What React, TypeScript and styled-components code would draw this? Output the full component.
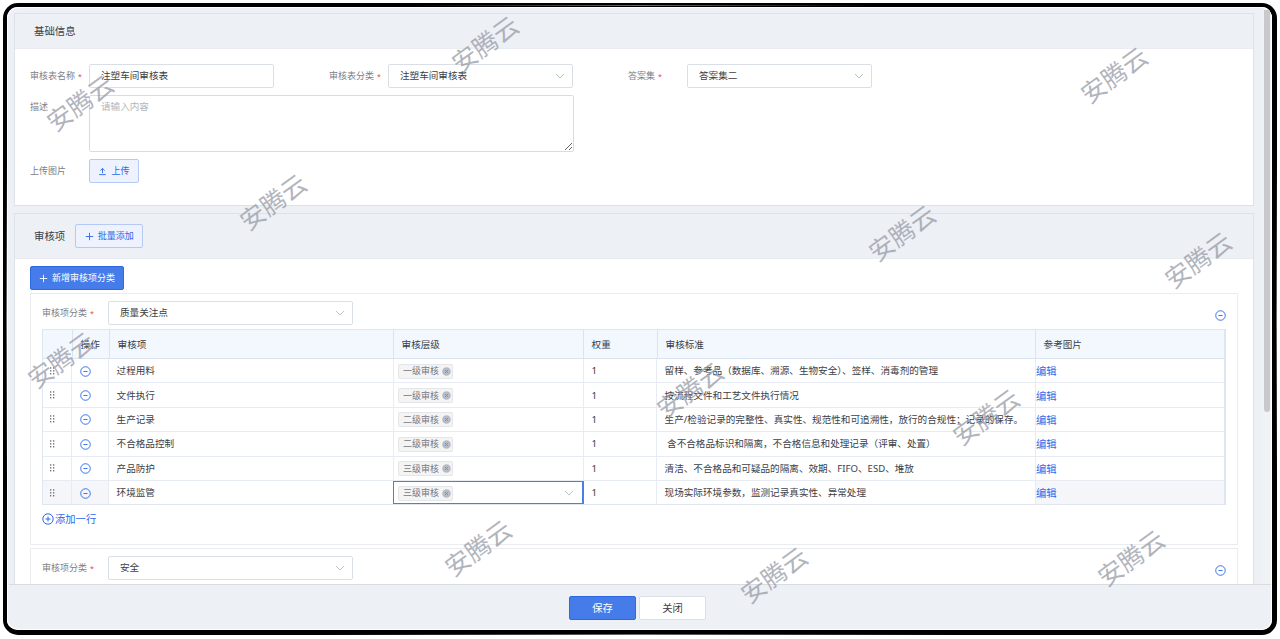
import React from 'react'
import styled, { createGlobalStyle, css } from 'styled-components'

const ROWS = [
  { name: '过程用料', level: '一级审核', standard: '留样、参考品（数据库、溯源、生物安全）、签样、消毒剂的管理' },
  { name: '文件执行', level: '一级审核', standard: '按流程文件和工艺文件执行情况' },
  { name: '生产记录', level: '二级审核', standard: '生产/检验记录的完整性、真实性、规范性和可追溯性，放行的合规性；记录的保存。' },
  { name: '不合格品控制', level: '二级审核', standard: ' 含不合格品标识和隔离，不合格信息和处理记录（评审、处置）' },
  { name: '产品防护', level: '三级审核', standard: '清洁、不合格品和可疑品的隔离、效期、FIFO、ESD、堆放' },
  { name: '环境监管', level: '三级审核', standard: '现场实际环境参数，监测记录真实性、异常处理' },
]

// centre points of the watermark stamps
const STAMPS = [
  [485, 44],
  [80, 103],
  [1114, 75],
  [273, 202],
  [902, 233],
  [1198, 260],
  [61, 360],
  [690, 390],
  [986, 417],
  [478, 548],
  [774, 575],
  [1131, 558],
]

const Chevron = () => (
  <ChevronSvg viewBox="0 0 10 10">
    <path d="M1 3l4 4 4-4" fill="none" stroke="#b4bac6" strokeWidth="0.9" />
  </ChevronSvg>
)

const CircleIcon = ({ size = 11, plus = false }: { size?: number; plus?: boolean }) => (
  <svg width={size} height={size} viewBox="0 0 12 12" fill="none" stroke="#2b68e8" strokeWidth="1">
    <circle cx="6" cy="6" r="5.2" />
    <path d={plus ? 'M3.5 6h5M6 3.5v5' : 'M3.8 6h4.4'} />
  </svg>
)

const PlusIcon = () => (
  <svg width="9" height="9" viewBox="0 0 9 9" fill="none" stroke="currentColor" strokeWidth="0.9">
    <path d="M0.8 4.5h7.4M4.5 0.8v7.4" />
  </svg>
)

const UploadIcon = () => (
  <svg width="9" height="9" viewBox="0 0 9 9" fill="none" stroke="currentColor" strokeWidth="0.9">
    <path d="M1.2 7.6h6.6M4.5 6.2V1.4M2.3 3.6l2.2-2.2 2.2 2.2" />
  </svg>
)

const DragIcon = () => (
  <svg width="5" height="8" viewBox="0 0 5 8" fill="#5f626a">
    {[0.3, 3.2, 6.1].map((y) => (
      <g key={y}>
        <rect x="0" y={y} width="1.3" height="1.3" />
        <rect x="3" y={y} width="1.3" height="1.3" />
      </g>
    ))}
  </svg>
)

const LevelTag = ({ text }: { text: string }) => (
  <Tag>
    {text}
    <svg width="9" height="9" viewBox="0 0 9 9">
      <circle cx="4.5" cy="4.5" r="4.3" fill="#b6bbc5" />
      <path d="M3 3l3 3M6 3L3 6" stroke="#848994" strokeWidth="0.8" />
    </svg>
  </Tag>
)

export default function App() {
  return (
    <Frame>
      <GlobalStyle />
      <Screen>
        <Main>
          <Content>
            <Section $height={193}>
              <SectionHeader $height={35}>基础信息</SectionHeader>
              <Form>
                <Label>
                  审核表名称<Star>*</Star>
                </Label>
                <Field>注塑车间审核表</Field>
                <Label>
                  审核表分类<Star>*</Star>
                </Label>
                <Field>
                  注塑车间审核表
                  <Chevron />
                </Field>
                <Label>
                  答案集<Star>*</Star>
                </Label>
                <Field>
                  答案集二
                  <Chevron />
                </Field>
                <Label>描述</Label>
                <TextArea placeholder="请输入内容" />
                <RowStartLabel>上传图片</RowStartLabel>
                <PlainButton $width={50}>
                  <UploadIcon />
                  上传
                </PlainButton>
              </Form>
            </Section>

            <Section $height={400}>
              <SectionHeader $height={45}>
                审核项
                <PlainButton $width={68}>
                  <PlusIcon />
                  批量添加
                </PlainButton>
              </SectionHeader>
              <SectionBody>
                <SolidButton>
                  <PlusIcon />
                  新增审核项分类
                </SolidButton>
                <Group>
                  <GroupHeader>
                    <GroupLabel>
                      审核项分类<Star>*</Star>
                    </GroupLabel>
                    <CategoryField>
                      质量关注点
                      <Chevron />
                    </CategoryField>
                    <CircleIcon />
                  </GroupHeader>
                  <Table>
                    <HeadRow>
                      <Cell />
                      <Cell>操作</Cell>
                      <Cell>审核项</Cell>
                      <Cell>审核层级</Cell>
                      <Cell>权重</Cell>
                      <Cell>审核标准</Cell>
                      <Cell>参考图片</Cell>
                    </HeadRow>
                    {ROWS.map((row, i) => {
                      const active = i === ROWS.length - 1
                      return (
                        <Row key={row.name}>
                          <DragCell $shaded={active}>
                            <DragIcon />
                          </DragCell>
                          <Cell $shaded={active}>
                            <CircleIcon />
                          </Cell>
                          <Cell>{row.name}</Cell>
                          <LevelCell $active={active}>
                            <LevelTag text={row.level} />
                            {active && <Chevron />}
                          </LevelCell>
                          <Cell>1</Cell>
                          <Cell>{row.standard}</Cell>
                          <LinkCell $shaded={active}>编辑</LinkCell>
                        </Row>
                      )
                    })}
                  </Table>
                  <AddRow>
                    <CircleIcon size={12} plus />
                    添加一行
                  </AddRow>
                </Group>
                <Group>
                  <GroupHeader>
                    <GroupLabel>
                      审核项分类<Star>*</Star>
                    </GroupLabel>
                    <CategoryField>
                      安全
                      <Chevron />
                    </CategoryField>
                    <CircleIcon />
                  </GroupHeader>
                </Group>
              </SectionBody>
            </Section>
          </Content>
          <ScrollTrack>
            <ScrollThumb />
          </ScrollTrack>
        </Main>
        <Footer>
          <FooterButton $primary>保存</FooterButton>
          <FooterButton>关闭</FooterButton>
        </Footer>
      </Screen>
      {STAMPS.map(([x, y]) => (
        <Stamp key={`${x}-${y}`} style={{ left: x, top: y }}>
          安腾云
        </Stamp>
      ))}
    </Frame>
  )
}

const GlobalStyle = createGlobalStyle`
  * {
    box-sizing: border-box;
  }
  body {
    margin: 0;
    overflow: hidden;
    background: #fff;
    color: #3b3e45;
    font-family: 'Noto Sans', 'Noto Sans CJK SC', sans-serif;
    font-size: 9.6px;
    line-height: 14px;
  }
`

const Frame = styled.div`
  width: 1280px;
  height: 639px;
  padding: 3px;
  padding-bottom: 4px;
`

// black bezel with a faint sheen in the middle of each side
const Screen = styled.div`
  width: 1274px;
  height: 632px;
  padding: 2px 1px 1px 2px;
  border: 4px solid transparent;
  border-right-width: 5px;
  border-bottom-width: 5px;
  border-radius: 15px;
  display: flex;
  flex-direction: column;
  overflow: hidden;
  background:
    linear-gradient(#edf0f5, #edf0f5) padding-box,
    linear-gradient(90deg, #000 32%, #6a6a6a 50%, #000 68%) 0 2px / 100% 1px no-repeat border-box,
    linear-gradient(90deg, #000 25%, #6a6a6a 50%, #000 75%) 0 100% / 100% 1px no-repeat border-box,
    linear-gradient(#000 25%, #6a6a6a 50%, #000 75%) 3px 0 / 1px 100% no-repeat border-box,
    linear-gradient(#000 25%, #6a6a6a 50%, #000 75%) 100% 0 / 1px 100% no-repeat border-box,
    linear-gradient(#000, #000) border-box;
  box-shadow: inset 0 0 0 1px #fff;
`

const Main = styled.div`
  height: 575px;
  flex: none;
  display: flex;
  overflow: hidden;
`

const Content = styled.div`
  width: 1254px;
  padding: 4px 9px 0 5px;
  display: flex;
  flex-direction: column;
  gap: 7px;
`

const ScrollTrack = styled.div`
  width: 8px;
  padding: 1px 1px 0;
  background: #f1f2f4;
`

const ScrollThumb = styled.div`
  height: 402px;
  border-radius: 0 0 3px 3px;
  background: #c9c9cb;
`

const Section = styled.section<{ $height: number }>`
  flex: none;
  height: ${({ $height }) => $height}px;
  border: 1px solid #dde2ea;
  background: #fff;
`

const SectionHeader = styled.header<{ $height: number }>`
  height: ${({ $height }) => $height}px;
  padding-left: 19px;
  display: flex;
  align-items: center;
  gap: 10px;
  background: #edf0f5;
  border-bottom: 1px solid #e9ecf1;
  font-size: 10.4px;
`

const Form = styled.div`
  padding: 15px 0 0 15px;
  display: grid;
  grid-template-columns: 59px 240px 59px 240px 59px 240px;
  grid-template-rows: 24px 57px 24px;
  row-gap: 7px;
`

const Label = styled.label`
  padding-top: 5px;
  color: #7d8086;
  font-size: 9px;
  white-space: nowrap;
`

const RowStartLabel = styled(Label)`
  grid-column-start: 1;
`

const Star = styled.span`
  margin-left: 3px;
  color: #f03a3a;
  font-size: 7px;
`

const Field = styled.div`
  width: 185px;
  height: 24px;
  padding: 0 7px 0 11px;
  display: flex;
  align-items: center;
  justify-content: space-between;
  border: 1px solid #dadee7;
  border-radius: 2px;
  background: #fff;
`

const CategoryField = styled(Field)`
  width: 245px;
  margin-right: auto;
`

const TextArea = styled.textarea`
  grid-column: 2 / 7;
  width: 485px;
  height: 57px;
  margin: 0;
  padding: 4px 11px;
  border: 1px solid #d6dbe4;
  border-radius: 2px;
  font: inherit;
  outline: none;
  resize: vertical;

  &::placeholder {
    color: #b3b6bd;
  }
`

const ChevronSvg = styled.svg`
  width: 10px;
  height: 10px;
  flex: none;
`

const PlainButton = styled.button<{ $width: number }>`
  width: ${({ $width }) => $width}px;
  height: 24px;
  padding: 0;
  display: flex;
  align-items: center;
  justify-content: center;
  gap: 4px;
  border: 1px solid #b5c9f7;
  border-radius: 2px;
  background: #edf2fe;
  color: #2b68e8;
  font: inherit;
  font-size: 9px;
`

const SectionBody = styled.div`
  padding: 7px 15px 0;
`

const SolidButton = styled(PlainButton).attrs({ $width: 94 })`
  margin-bottom: 3px;
  border-color: #2f69e2;
  background: #467ce9;
  color: #fff;
`

const Group = styled.div`
  height: 252px;
  margin-bottom: 3px;
  padding: 7px 11px 0;
  border: 1px solid #eaecf0;
`

const GroupHeader = styled.div`
  height: 24px;
  margin-bottom: 4px;
  display: flex;
  align-items: center;

  > svg {
    margin-top: 4px;
  }
`

const GroupLabel = styled(Label)`
  width: 66px;
  padding: 1px 0 0;
`

const Table = styled.div`
  width: 1184px;
  border: 1px solid #e0e6f0;
  border-right-width: 2px;
`

const Row = styled.div`
  height: 24.4px;
  display: grid;
  grid-template-columns: 29px 37px 285px 190px 73px 379px 1fr;
  border-bottom: 1px solid #e7ebf3;

  &:last-child {
    height: 23.4px;
    border-bottom: 0;
  }
`

const Cell = styled.div<{ $shaded?: boolean }>`
  padding: 1px 0 0 7.6px;
  display: flex;
  align-items: center;
  border-right: 1px solid #e7ebf3;
  background: ${({ $shaded }) => ($shaded ? '#f4f6fa' : 'transparent')};
  white-space: pre;

  &:last-child {
    border-right: 0;
  }
`

const DragCell = styled(Cell)`
  padding: 0 0 0 7px;
`

const HeadRow = styled(Row)`
  height: 29px;
  grid-template-columns: 30px 37px 284px 190px 74px 378px 1fr;
  background: #f3f7fe;
  border-bottom-color: #dbe3ef;

  ${Cell} {
    border-right-color: #dbe3ef;
  }
`

const LevelCell = styled(Cell)<{ $active: boolean }>`
  padding: 1px 8px 0 4px;
  justify-content: space-between;
  ${({ $active }) =>
    $active &&
    css`
      margin-left: -1px;
      border: 1px solid #4a7fe8;
      border-right: 2px solid #4a7fe8;
    `}
`

const LinkCell = styled(Cell)`
  padding-left: 0;
  color: #2b68e8;
  font-size: 10.3px;
`

const Tag = styled.span`
  width: 55px;
  height: 15px;
  padding: 0 0 0 4px;
  display: flex;
  align-items: center;
  gap: 3px;
  border: 1px solid #e4e6ea;
  border-radius: 2px;
  background: #f4f4f5;
  color: #74777d;
  font-size: 9px;
`

const AddRow = styled.div`
  margin-top: 7px;
  display: flex;
  align-items: center;
  gap: 1px;
  color: #2b68e8;
  font-size: 10.3px;
`

const Footer = styled.footer`
  height: 46px;
  padding-top: 11px;
  padding-right: 5px;
  display: flex;
  justify-content: center;
  gap: 3px;
  border-top: 1px solid #d9dce2;
`

const FooterButton = styled.button<{ $primary?: boolean }>`
  width: 67px;
  height: 24px;
  padding: 0;
  border: 1px solid ${({ $primary }) => ($primary ? '#2f69e2' : '#dcdfe6')};
  border-radius: 2px;
  background: ${({ $primary }) => ($primary ? '#467ce9' : '#fff')};
  color: ${({ $primary }) => ($primary ? '#fff' : '#3d4047')};
  font: inherit;
  font-size: 10.3px;
`

const Stamp = styled.span`
  position: absolute;
  transform: translate(-50%, -50%) rotate(-36deg);
  color: rgba(152, 155, 167, 0.75);
  font-size: 25px;
  line-height: 1;
  white-space: nowrap;
  pointer-events: none;
`
